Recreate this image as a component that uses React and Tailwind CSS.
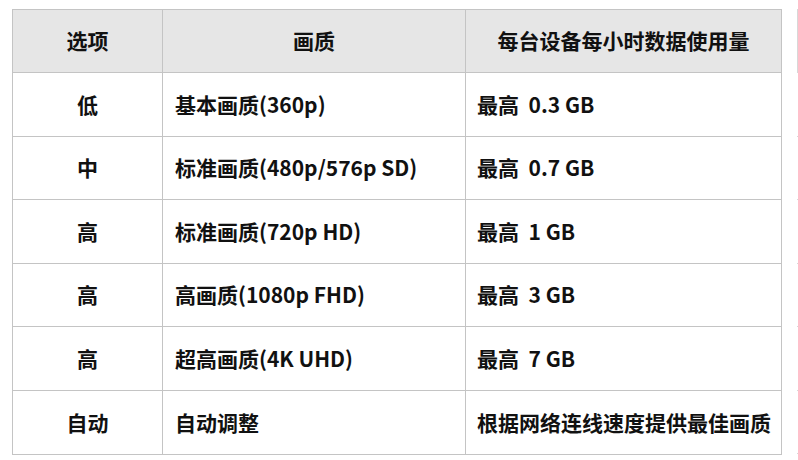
import React from 'react';

const rows = [
  { option: '低', quality: '基本画质(360p)', usage: '最高  0.3 GB' },
  { option: '中', quality: '标准画质(480p/576p SD)', usage: '最高  0.7 GB' },
  { option: '高', quality: '标准画质(720p HD)', usage: '最高  1 GB' },
  { option: '高', quality: '高画质(1080p FHD)', usage: '最高  3 GB' },
  { option: '高', quality: '超高画质(4K UHD)', usage: '最高  7 GB' },
  { option: '自动', quality: '自动调整', usage: '根据网络连线速度提供最佳画质' },
];

const App = () => {
  return (
    <div
      className="w-[798px] h-[460px] overflow-hidden bg-white text-[#111] font-semibold"
      style={{ fontFamily: '"Noto Sans CJK SC", "Noto Sans", sans-serif' }}
    >
      <div className="flex gap-[15px] pt-[9px] pl-[12px]">
        {/* data usage table */}
        <div className="w-[770px] shrink-0 border border-[#c4c4c4] text-[21px]">
          <div className="flex h-[63px] bg-[#e6e6e6] border-b border-[#c4c4c4]">
            <div className="w-[150px] flex items-center justify-center border-r border-[#c4c4c4]">选项</div>
            <div className="w-[303px] flex items-center justify-center border-r border-[#c4c4c4]">画质</div>
            <div className="flex-1 flex items-center justify-center">每台设备每小时数据使用量</div>
          </div>
          {rows.map((r, i) => (
            <div
              key={i}
              className={`flex h-[63.5px] ${i < rows.length - 1 ? 'border-b border-[#c4c4c4]' : ''}`}
            >
              <div className="w-[150px] flex items-center justify-center border-r border-[#c4c4c4]">{r.option}</div>
              <div className="w-[303px] flex items-center pl-[12px] border-r border-[#c4c4c4]">{r.quality}</div>
              <div className="flex-1 flex items-center pl-[11px] whitespace-pre">{r.usage}</div>
            </div>
          ))}
        </div>

        {/* next table, cut off at the window edge */}
        <div className="w-[300px] shrink-0">
          <div className="h-[64px] border-l border-t border-b border-[#d8d8d8] bg-[#e6e6e6]" />
          {rows.map((_, i) => (
            <div key={i} className="h-[63.5px] border-b border-dotted border-[#d8d8d8]" />
          ))}
        </div>
      </div>
    </div>
  );
};

export default App;
